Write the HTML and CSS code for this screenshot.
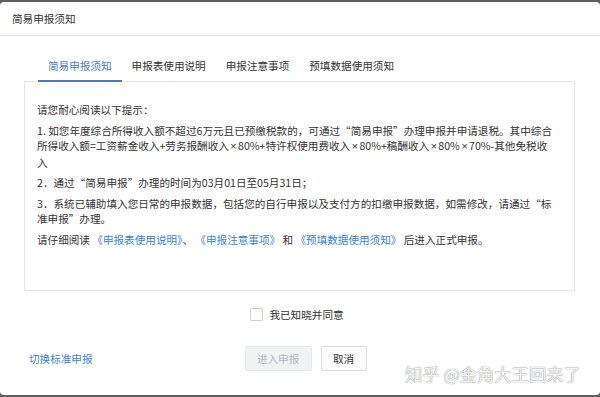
FILE: index.html
```html
<!DOCTYPE html>
<html lang="zh-CN">
<head>
<meta charset="utf-8">
<title>简易申报须知</title>
<link rel="stylesheet" href="styles.css">
</head>
<body>
<div class="dialog">
  <div class="dialog-header">简易申报须知</div>
  <div class="tabs">
    <div class="tab active">简易申报须知</div>
    <div class="tab">申报表使用说明</div>
    <div class="tab">申报注意事项</div>
    <div class="tab">预填数据使用须知</div>
  </div>
  <div class="content">
    <p>请您耐心阅读以下提示：</p>
    <p>1. 如您年度综合所得收入额不超过6万元且已预缴税款的，可通过“简易申报”办理申报并申请退税。其中综合所得收入额=工资薪金收入+劳务报酬收入<span class="latin">×</span>80%+特许权使用费收入<span class="latin">×</span>80%+稿酬收入<span class="latin">×</span>80%<span class="latin">×</span>70%-其他免税收入</p>
    <p>2．通过“简易申报”办理的时间为03月01日至05月31日；</p>
    <p>3．系统已辅助填入您日常的申报数据，包括您的自行申报以及支付方的扣缴申报数据，如需修改，请通过“标准申报”办理。</p>
    <p>请仔细阅读 <a class="link">《申报表使用说明》</a>、 <a class="link">《申报注意事项》</a> 和 <a class="link">《预填数据使用须知》</a> 后进入正式申报。</p>
  </div>
  <div class="agree">
    <span class="checkbox"></span>
    <span class="agree-text">我已知晓并同意</span>
  </div>
  <div class="footer">
    <a class="switch">切换标准申报</a>
    <div class="actions">
      <button class="btn btn-disabled">进入申报</button>
      <button class="btn btn-cancel">取消</button>
    </div>
  </div>
  <div class="watermark">知乎 @金角大王回来了</div>
</div>
</body>
</html>
```
FILE: styles.css
```css
html, body {
  margin: 0;
  padding: 0;
}
body {
  width: 600px;
  height: 397px;
  overflow: hidden;
  background: #5e5e5e;
  font-family: "Noto Sans CJK SC", "Noto Sans", sans-serif;
  color: #333;
  font-size: 10.6px;
}
.dialog {
  position: relative;
  margin-top: 2px;
  height: 393px;
  background: #fff;
  border-radius: 4px;
  overflow: hidden;
}
.dialog-header {
  height: 33px;
  line-height: 33px;
  padding-left: 12px;
  border-bottom: 1px solid #e6e6e6;
  color: #333;
}
.tabs {
  display: flex;
  margin: 16px 25px 0 24px;
  padding-left: 14px;
}
.tab {
  height: 28px;
  line-height: 28px;
  padding: 0 10px;
  border-bottom: 2px solid transparent;
  color: #333;
  margin-bottom: -1px;
  position: relative;
}
.tab.active {
  color: #4a7cc3;
  border-bottom-color: #4a7cc3;
}
.content {
  box-sizing: border-box;
  margin: 0 25px 0 24px;
  height: 210px;
  border: 1px solid #e6e6e6;
  padding: 20px 22px 0 12px;
}
.content p {
  margin: 0 0 5px;
  line-height: 15.5px;
}
.latin {
  font-family: "Liberation Sans", sans-serif;
  margin: 0 1.5px;
}
.link {
  color: #3f7fd1;
}
.agree {
  display: flex;
  align-items: center;
  justify-content: center;
  margin-top: 13px;
  height: 20px;
  padding-right: 6px;
}
.checkbox {
  width: 11px;
  height: 11px;
  border: 1px solid #cfcfcf;
  border-radius: 2px;
  margin-right: 6px;
}
.footer {
  display: flex;
  align-items: center;
  margin-top: 22px;
  padding-left: 29px;
}
.switch {
  color: #3f7fd1;
}
.actions {
  display: flex;
  gap: 9px;
  margin-left: 152px;
}
.btn {
  font-family: inherit;
  font-size: 10.6px;
  height: 25px;
  border-radius: 2px;
  padding: 0;
  cursor: default;
}
.btn-disabled {
  width: 67px;
  background: #f1f2f4;
  border: 1px solid #e6e8eb;
  color: #b3b7be;
}
.btn-cancel {
  width: 46px;
  background: #fff;
  border: 1px solid #dcdcdc;
  color: #333;
}
.watermark {
  position: absolute;
  left: 405px;
  top: 360px;
  font-size: 17.3px;
  line-height: 24px;
  color: #f4f4f4;
  text-shadow: 0 0 1px #999, 0 0 1px #999;
  white-space: nowrap;
}
```
